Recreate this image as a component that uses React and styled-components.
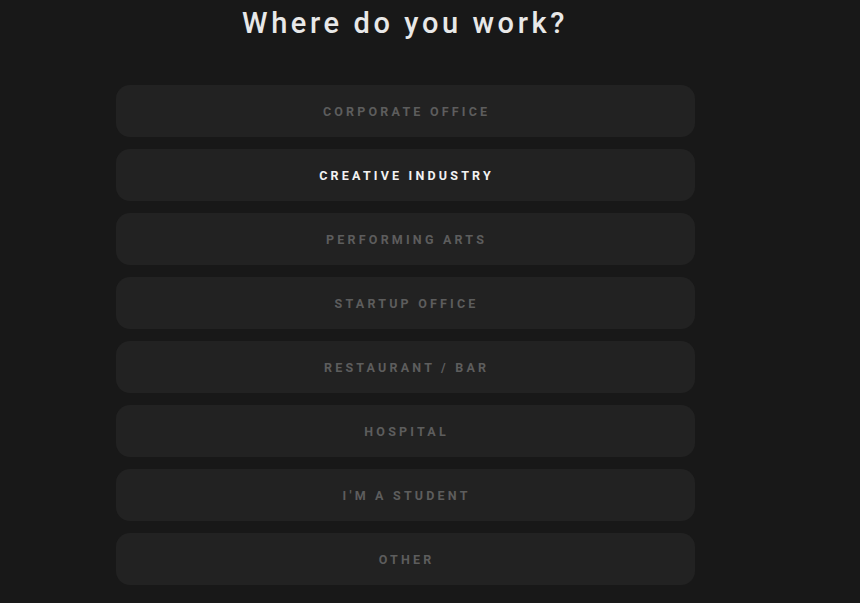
import React, { useState } from "react";
import styled, { createGlobalStyle } from "styled-components";

const Global = createGlobalStyle`
  html, body { margin: 0; padding: 0; background: #181818; }
  body { font-family: Roboto, "DejaVu Sans", sans-serif; }
`;

const Page = styled.div`
  width: 810px;
  min-height: 603px;
  display: flex;
  flex-direction: column;
  align-items: center;
  background: #181818;
`;

const Title = styled.h1`
  margin: 5px 0 0;
  font-size: 29px;
  line-height: 36px;
  font-weight: 500;
  letter-spacing: 3.6px;
  color: #e8e8e8;
`;

const List = styled.div`
  margin-top: 44px;
  width: 579px;
  display: flex;
  flex-direction: column;
  gap: 12px;
`;

const Option = styled.button`
  height: 52px;
  border: none;
  border-radius: 14px;
  background: #222222;
  color: ${p => (p.$active ? "#f2f2f2" : "#5d5d5d")};
  font-family: Roboto, "DejaVu Sans", sans-serif;
  font-size: 12.5px;
  font-weight: 700;
  letter-spacing: 3.2px;
  text-transform: uppercase;
  cursor: pointer;
  padding: 0 0 0 3.2px;
`;

const options = [
  "Corporate office",
  "Creative industry",
  "Performing arts",
  "Startup office",
  "Restaurant / bar",
  "Hospital",
  "I'm a student",
  "Other",
];

const App = () => {
  const [active, setActive] = useState(1);
  return (
    <Page>
      <Global />
      <Title>Where do you work?</Title>
      <List>
        {options.map((o, i) => (
          <Option key={o} $active={i === active} onClick={() => setActive(i)}>
            {o}
          </Option>
        ))}
      </List>
    </Page>
  );
};

export default App;
